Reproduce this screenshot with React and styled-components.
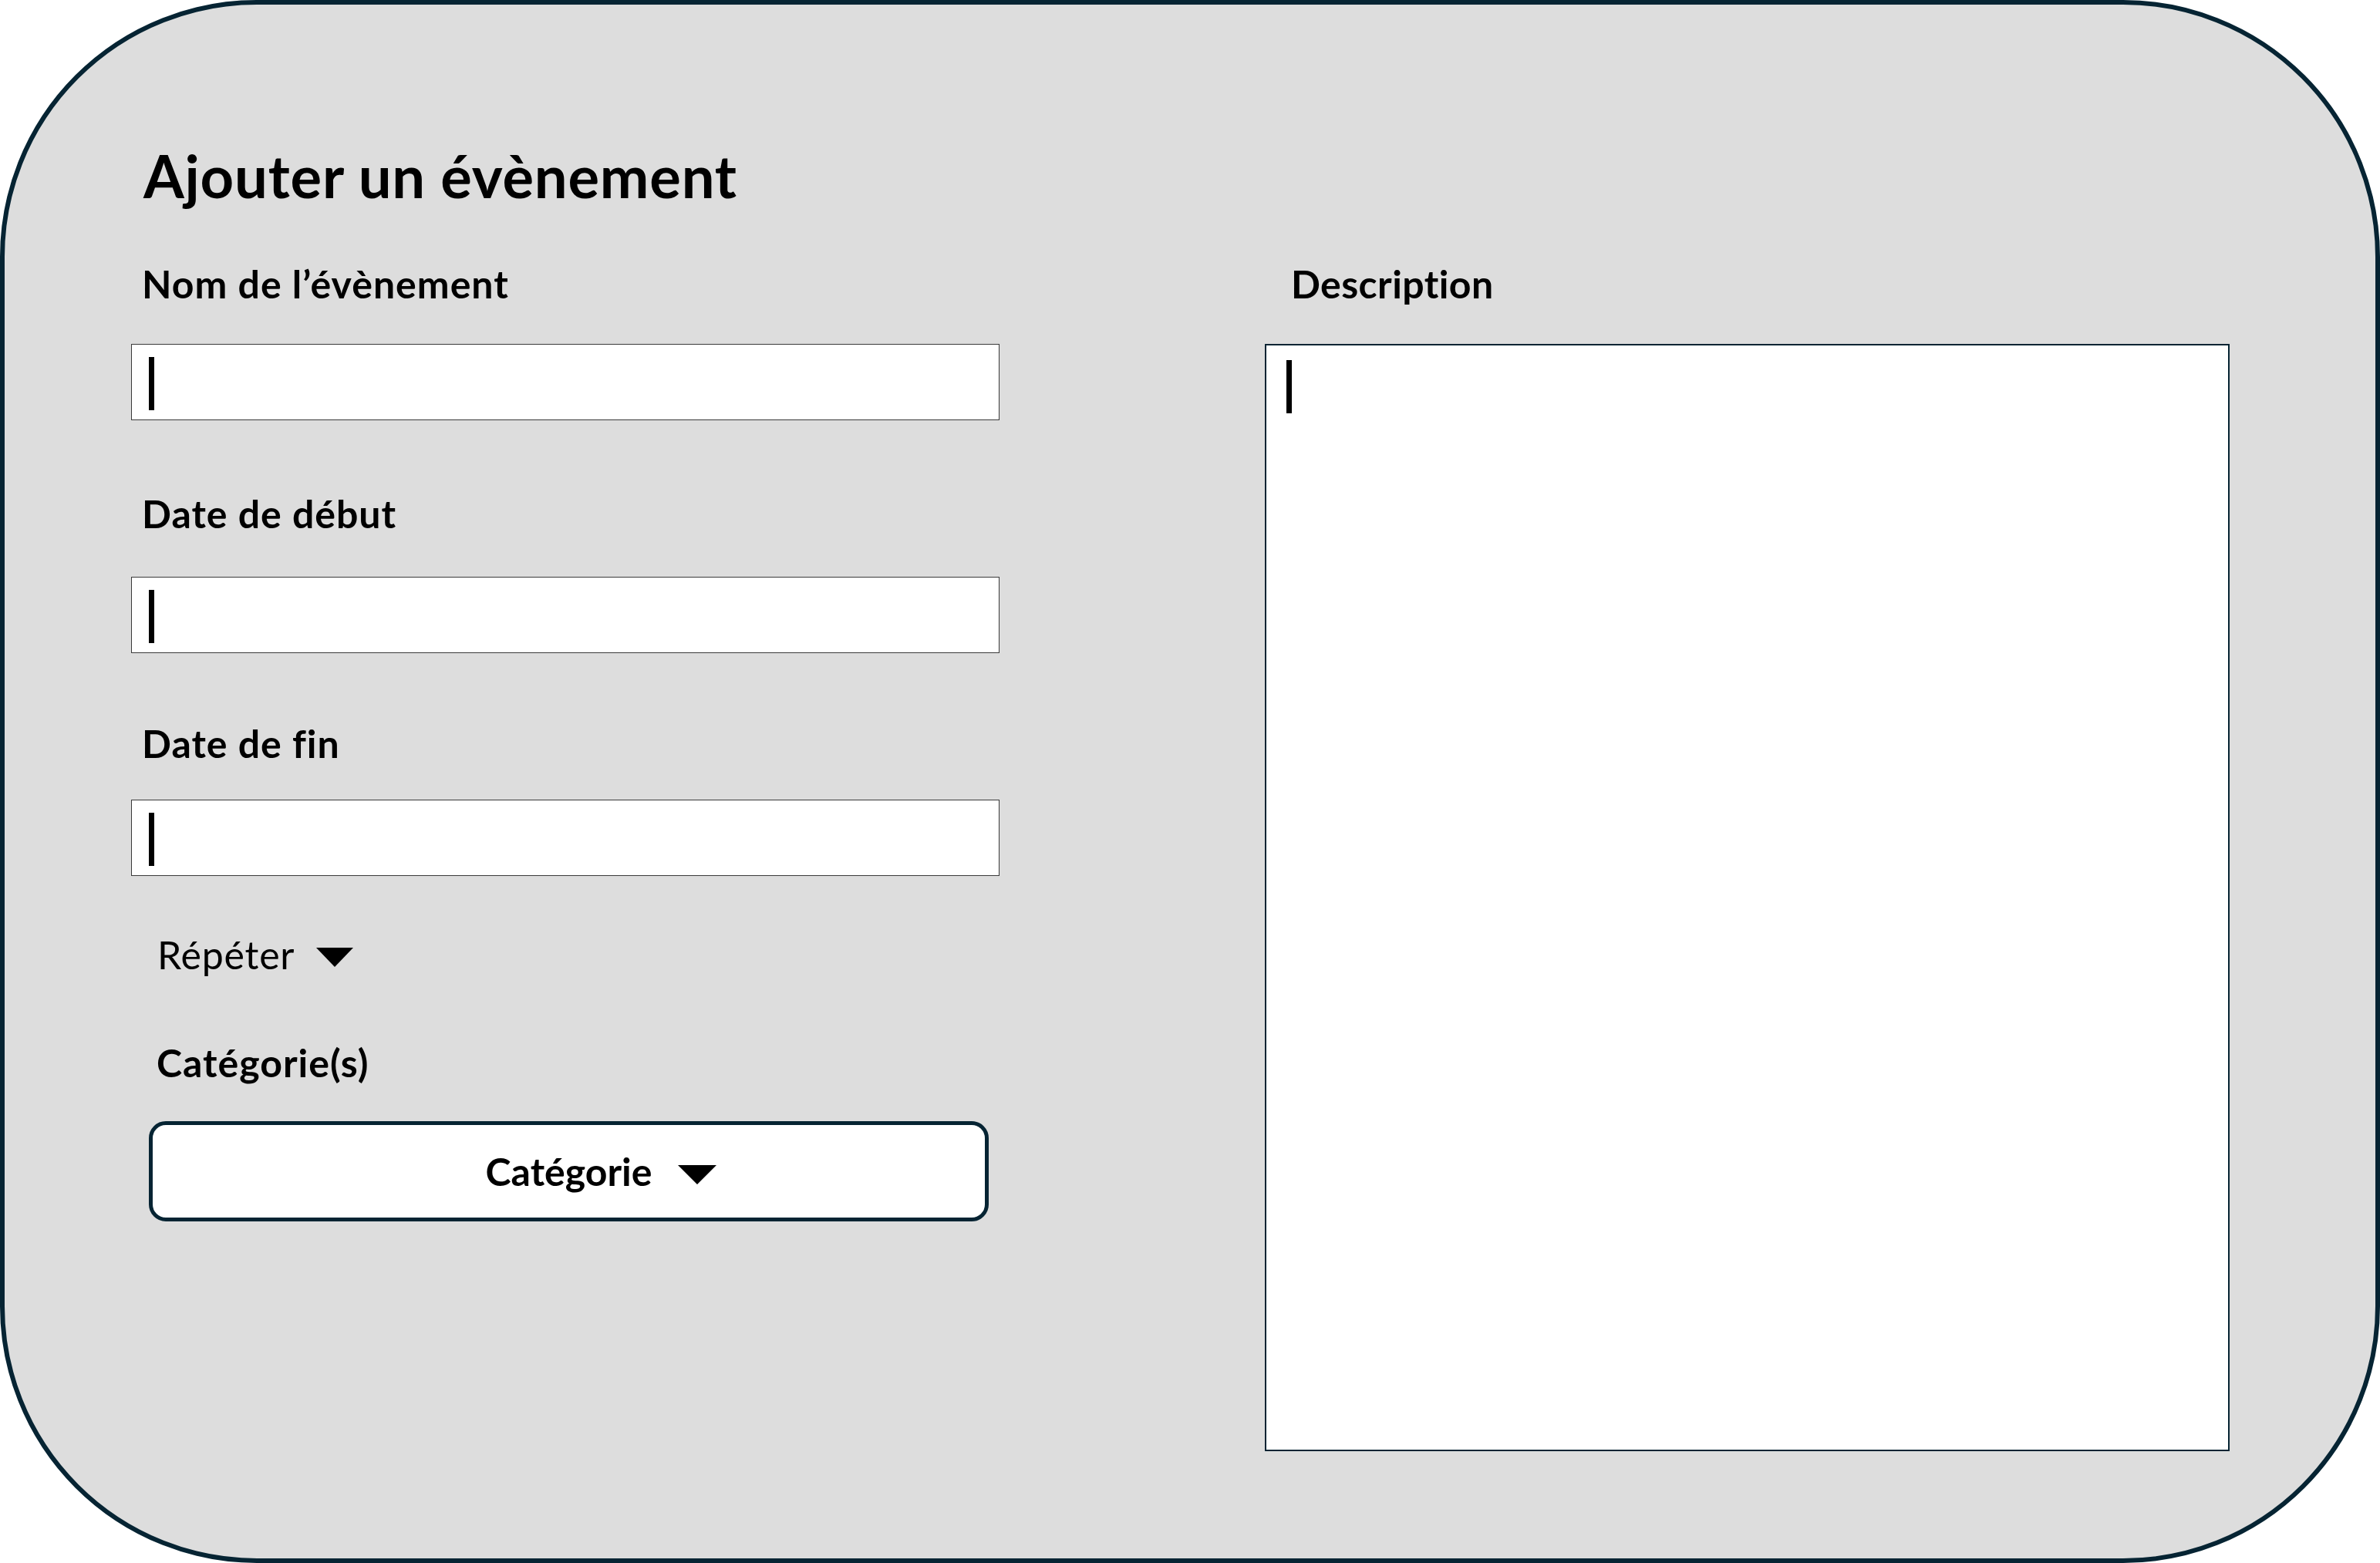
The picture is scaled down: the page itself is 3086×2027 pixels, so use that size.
import React from "react";
import styled, { createGlobalStyle } from "styled-components";

const GlobalStyle = createGlobalStyle`
  html, body {
    margin: 0;
    padding: 0;
    background: #ffffff;
  }
  body {
    font-family: Lato, "Open Sans", sans-serif;
    font-variant-ligatures: none;
    color: #000000;
  }
`;

const Card = styled.div`
  box-sizing: border-box;
  width: 3086px;
  height: 2027px;
  background: #dddddd;
  border: 6px solid #062433;
  border-radius: 333px;
  padding: 177px 189px 0 164px;
`;

const Title = styled.h1`
  margin: 0;
  padding-left: 16px;
  font-size: 76px;
  line-height: 90px;
  font-weight: 700;
  letter-spacing: 0.8px;
`;

const Columns = styled.div`
  display: grid;
  grid-template-columns: 1126px 1251px;
  column-gap: 344px;
  margin-top: 66px;
  align-items: start;
`;

const Column = styled.div`
  display: flex;
  flex-direction: column;
  align-items: flex-start;
`;

const Label = styled.div`
  margin-top: ${(p) => p.$top || 0}px;
  padding-left: ${(p) => (p.$indent ? p.$indent : 14)}px;
  font-size: 50px;
  line-height: 58px;
  font-weight: 700;
  letter-spacing: ${(p) => (p.$spacing !== undefined ? p.$spacing : 1)}px;
`;

const TextField = styled.div`
  box-sizing: border-box;
  width: 100%;
  height: 99px;
  margin-top: ${(p) => p.$top || 0}px;
  background: #ffffff;
  border: 1px solid #3a3a3a;
  padding: 16px 0 0 22px;
`;

const TextArea = styled.div`
  box-sizing: border-box;
  width: 100%;
  height: 1436px;
  margin-top: 49px;
  background: #ffffff;
  border: 2px solid #062433;
  padding: 19px 0 0 26px;
`;

const Caret = styled.span`
  display: block;
  width: 7px;
  height: 69px;
  background: #000000;
`;

const Dropdown = styled.div`
  display: flex;
  align-items: center;
  margin-top: 73px;
  padding-left: 34px;
  font-size: 50px;
  line-height: 58px;
  font-weight: 400;
  letter-spacing: 0.8px;
`;

const Arrow = styled.span`
  display: inline-block;
  width: 0;
  height: 0;
  margin-left: ${(p) => p.$gap}px;
  margin-top: ${(p) => p.$drop}px;
  border-left: ${(p) => p.$w / 2}px solid transparent;
  border-right: ${(p) => p.$w / 2}px solid transparent;
  border-top: 25px solid #000000;
`;

const CategoryButton = styled.button`
  box-sizing: border-box;
  display: flex;
  align-items: center;
  justify-content: center;
  width: 1089px;
  height: 130px;
  margin: 47px 0 0 23px;
  padding: 0 0 0 84px;
  background: #ffffff;
  border: 5px solid #062433;
  border-radius: 22px;
  font-family: Lato, "Open Sans", sans-serif;
  font-variant-ligatures: none;
  font-size: 50px;
  line-height: 60px;
  font-weight: 700;
  color: #000000;
  cursor: pointer;
`;

const fields = [
  { label: "Nom de l’évènement", labelTop: 0, fieldTop: 49 },
  { label: "Date de début", labelTop: 92, fieldTop: 53 },
  { label: "Date de fin", labelTop: 88, fieldTop: 44 },
];

export default function App() {
  return (
    <>
      <GlobalStyle />
      <Card>
        <Title>Ajouter un évènement</Title>
        <Columns>
          <Column>
            {fields.map((f) => (
              <React.Fragment key={f.label}>
                <Label $top={f.labelTop}>{f.label}</Label>
                <TextField $top={f.fieldTop}>
                  <Caret />
                </TextField>
              </React.Fragment>
            ))}

            <Dropdown>
              Répéter
              <Arrow $w={48} $gap={28} $drop={6} />
            </Dropdown>

            <Label $top={82} $indent={33}>
              Catégorie(s)
            </Label>
            <CategoryButton type="button">
              Catégorie
              <Arrow $w={50} $gap={34} $drop={8} />
            </CategoryButton>
          </Column>

          <Column>
            <Label $indent={34} $spacing={0.4}>
              Description
            </Label>
            <TextArea>
              <Caret />
            </TextArea>
          </Column>
        </Columns>
      </Card>
    </>
  );
}
